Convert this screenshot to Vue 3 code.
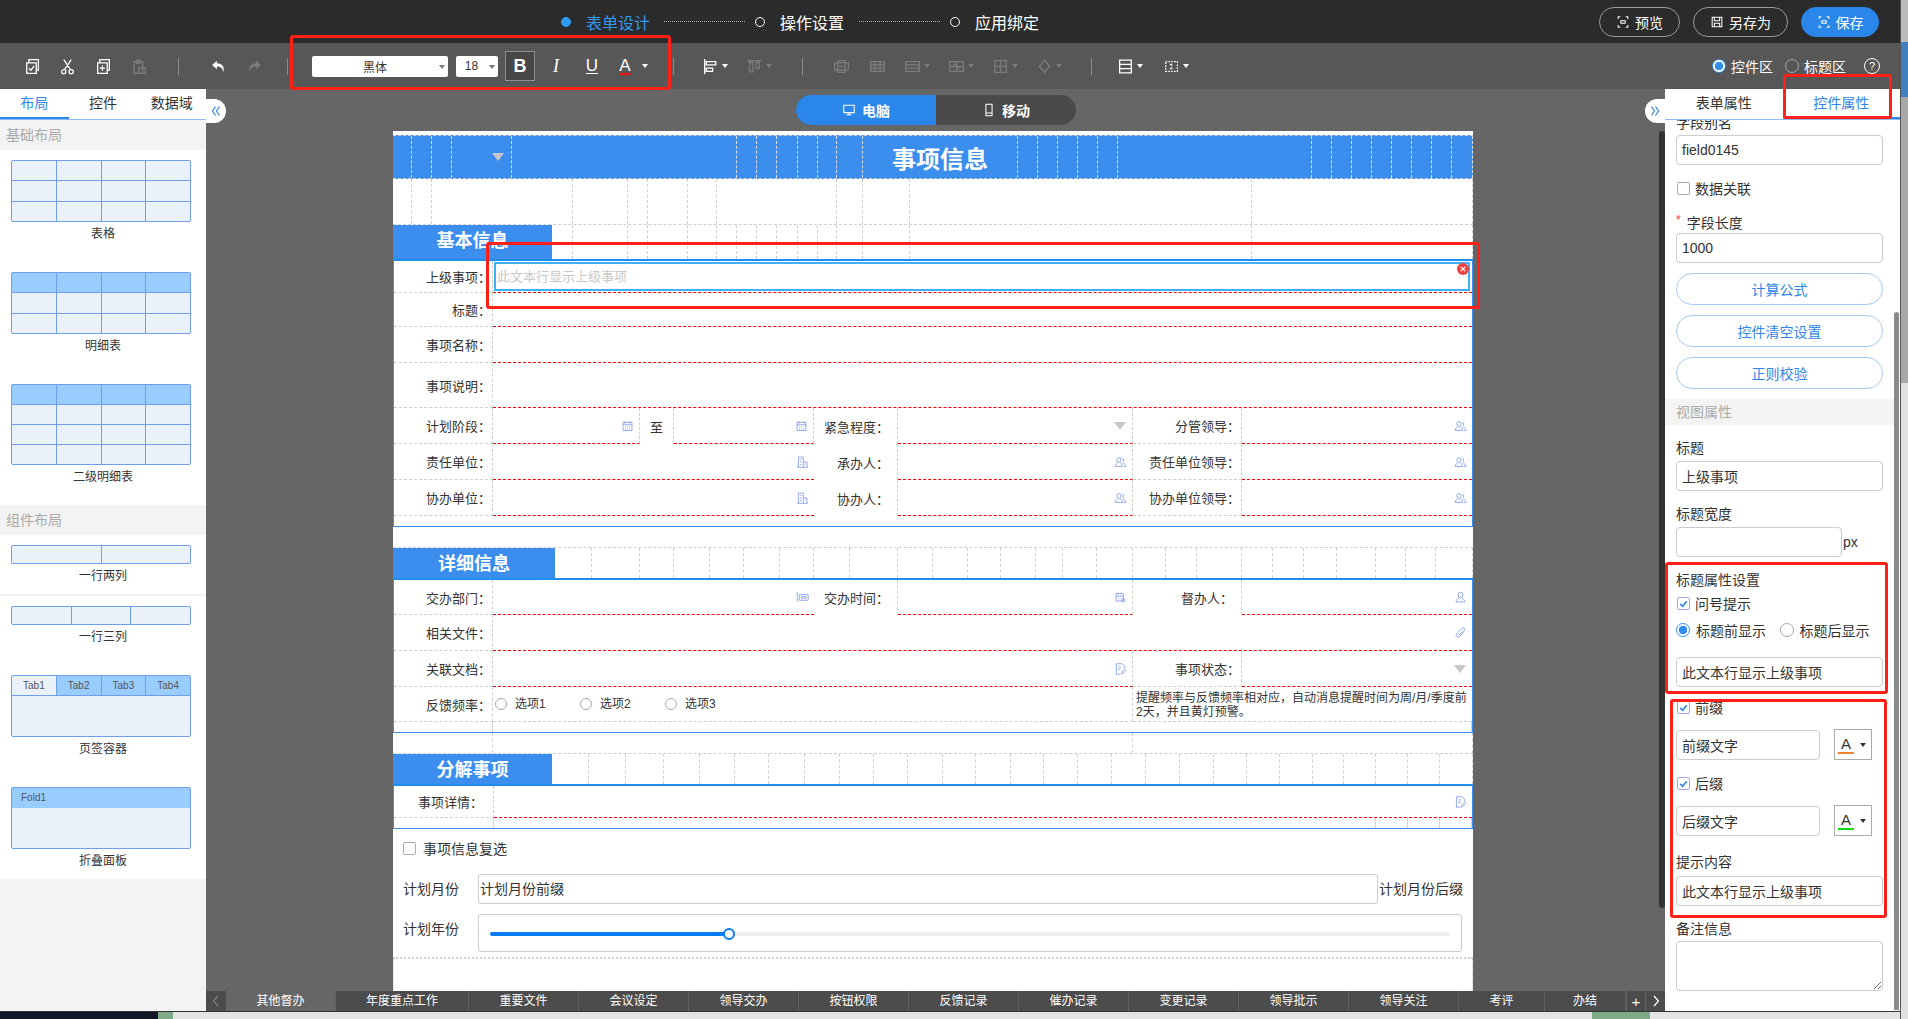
<script setup>
const icons = {
  checkDoc: 'M3.5 4.5h9v10h-9zM5.5 4.5v-3h9v10h-2M5.5 9.5l2 2 3-4',
  scissors: 'M4.5 1.5l6 9M11.5 1.5l-6 9M2.5 13a2 2 0 1 0 4 0 2 2 0 1 0-4 0M9.5 13a2 2 0 1 0 4 0 2 2 0 1 0-4 0',
  copyPlus: 'M2.5 4.5h9v10h-9zM4.5 4.5v-3h9v10h-2M7 7v5M4.5 9.5h5',
  paste: 'M3 3.5h8v11H3zM5.5 2h3v3h-3zM7.5 9h6v5.5h-6z',
  undo: 'M6.5 2.5L2 6.5l4.5 4V8c3.5 0 5.5 1.5 6 5.5 1.5-5-1-8.5-6-8.5z',
  redo: 'M9.5 2.5l4.5 4-4.5 4V8c-3.5 0-5.5 1.5-6 5.5-1.5-5 1-8.5 6-8.5z',
  alignLeft: 'M2.5 1v14M4 3.5h9v3H4zM4 9.5h6v3H4z',
  alignTop: 'M1 2.5h14M3.5 4v9h3V4zM9.5 4v6h3V4z',
  merge: 'M1.5 4.5h13v7h-13zM4.5 2.5h7v11h-7zM6 8h4',
  split: 'M1.5 3.5h13v9h-13zM1.5 6.5h13M1.5 9.5h13M5.5 3.5v9M10.5 3.5v9',
  rows: 'M1.5 3.5h13v9h-13zM1.5 6.5h13M1.5 9.5h13',
  cross: 'M1.5 3.5h13v9h-13zM1.5 8h13M8 3.5v9M5 5.5l6 5',
  table: 'M2.5 2.5h11v11h-11zM2.5 8h11M8 2.5v11',
  fill: 'M8 2l5 6-5 5-5-5zM8 13v2',
  layout: 'M2.5 2h11v12h-11zM2.5 6h11M2.5 10h11',
  field: 'M2.5 3.5h11v9h-11zM8 6v4M6.5 6h3M6.5 10h3',
  calendar: 'M2.5 3.5h11v10h-11zM2.5 6.5h11M5 2v3M11 2v3M5 9h1M7.5 9h1M10 9h1M5 11.5h1M7.5 11.5h1M10 11.5h1',
  building: 'M3 14.5V2h6v12.5M1.5 14.5h13M9 8h4.5v6.5M5 5h2M5 8h2M5 11h2M11 11h1',
  people: 'M6 2.5a2.5 3 0 0 1 0 6 2.5 3 0 0 1 0-6zM1.5 13.5c0-3 2-3.5 3-4.5M10.5 13.5c0-3-2-3.5-3-4.5M1.5 13.5h9M10 3a2.5 3 0 0 1 .5 5.5M11 9.5c2 .5 3.5 1.5 3.5 4h-2.5',
  person: 'M8 2a3 3.5 0 0 1 0 7 3 3.5 0 0 1 0-7zM2.5 14c0-3 2.5-3.5 4-5M13.5 14c0-3-2.500-3.500-4-5M2.500 14h11',
  dept: 'M1.500 2v12M4 5h11v7H4zM6.500 7.500h6v2h-6z',
  calClock: 'M2.500 4h9v9h-9zM2.500 7h9M5 2.500v2M9 2.500v2M5 9.500h1M8 9.500h1M11.500 10a2 2 0 1 1 0 4 2 2 0 1 1 0-4z',
  clip: 'M13 6l-6.500 6.500a2.500 2.500 0 0 1-3.500-3.500l7-7a1.700 1.700 0 0 1 2.500 2.500L6 10.500',
  doc: 'M3 1.500h7l3 3v3M3 1.500v13h5M5 5.500h4M5 8.500h3M9 14l1-2.500 3-3 1.500 1.500-3 3z',
  screen: 'M2 2.500h12v8.500H2zM8 11v2.500M5 13.500h6',
  phone: 'M4.500 1.500h7v13h-7zM4.500 11.500h7',
  scan: 'M5 2H2.500v2.500M11 2h2.500v2.500M5 14H2.500v-2.500M11 14h2.500v-2.500M5.500 6.500h5v3h-5z',
  save: 'M2.500 2.500h11v11h-11zM5 2.500v4h6v-4M5 13.500v-4h6v4'
}

const basicRows = [
  [{ label: '上级事项：' }, { span: 7, selected: true }],
  [{ label: '标题：' }, { span: 7 }],
  [{ label: '事项名称：' }, { span: 7 }],
  [{ label: '事项说明：' }, { span: 7 }],
  [{ label: '计划阶段：' }, { icon: 'calendar', edge: true }, { text: '至', plain: true }, { icon: 'calendar', edge: true }, { label: '紧急程度：', plain: true }, { tri: true, edge: true }, { label: '分管领导：' }, { icon: 'people' }],
  [{ label: '责任单位：' }, { span: 3, icon: 'building' }, { label: '承办人：', plain: true }, { icon: 'people', edge: true }, { label: '责任单位领导：' }, { icon: 'people' }],
  [{ label: '协办单位：' }, { span: 3, icon: 'building' }, { label: '协办人：', plain: true }, { icon: 'people', edge: true }, { label: '协办单位领导：' }, { icon: 'people' }]
]

const detailRows = [
  [{ label: '交办部门：' }, { span: 3, icon: 'dept' }, { label: '交办时间：', plain: true }, { icon: 'calClock', edge: true }, { label: '督办人：', plain: true }, { icon: 'person' }],
  [{ label: '相关文件：' }, { span: 7, icon: 'clip' }],
  [{ label: '关联文档：' }, { span: 5, icon: 'doc', edge: true }, { label: '事项状态：' }, { tri: true }],
  [{ label: '反馈频率：' }, { span: 5, radios: ['选项1', '选项2', '选项3'], gray: true, edge: true }, { span: 2, note: '提醒频率与反馈频率相对应，自动消息提醒时间为周/月/季度前2天，并且黄灯预警。' }]
]

const rowClass = ['r32', 'r34', 'r36', 'r45', 'r36', 'r36', 'r36']
const detailClass = ['r35', 'r36', 'r36', 'r35']

// dashed cell runs, positions are the vertical guide lines of the form designer
function segs(start, lines, end) {
  const xs = [start, ...lines, end]
  return xs.slice(0, -1).map((x, i) => ({ x, w: xs[i + 1] - x }))
}

const headCells = segs(393, [412, 432, 452, 512, 737, 757, 777, 798, 818, 837, 863, 1018, 1038, 1058, 1078, 1098, 1118, 1312, 1332, 1352, 1372, 1392, 1412, 1432, 1452], 1473)
const guideCells = segs(393, [412, 432, 573, 628, 648, 688, 717, 837, 863, 910, 1252], 1473)
const banner1Cells = segs(552, [573, 628, 648, 688, 717, 737, 757, 777, 798, 818, 837, 863, 910, 1252], 1473)
const banner2Cells = segs(555, [592, 640, 674, 710, 744, 780, 814, 850, 898, 933, 968, 1001, 1036, 1063, 1097, 1133, 1166, 1197, 1242, 1273, 1304, 1337, 1376, 1406, 1436], 1473)
const banner3Cells = segs(552, [589, 626, 664, 700, 735, 769, 805, 840, 874, 908, 943, 976, 1011, 1044, 1078, 1112, 1146, 1180, 1214, 1247, 1280, 1313, 1344, 1376, 1408, 1440], 1473)
const gapCells = segs(393, [493, 1133], 1473)
const fillCells = segs(394, [493], 1472)
const tailCells = segs(394, [494, 1376, 1408, 1440], 1472)

const leftTop = [
  { name: '表格', cols: 4, rows: 3, head: 0 },
  { name: '明细表', cols: 4, rows: 3, head: 1 },
  { name: '二级明细表', cols: 4, rows: 4, head: 1 }
]
const tabs4 = ['Tab1', 'Tab2', 'Tab3', 'Tab4']
const bottomTabs = ['其他督办', '年度重点工作', '重要文件', '会议设定', '领导交办', '按钮权限', '反馈记录', '催办记录', '变更记录', '领导批示', '领导关注', '考评', '办结']
</script>

<template>
  <div class="page">
    <div class="app">
      <header class="topbar">
        <div class="steps">
          <span class="dot on"></span><span class="step on">表单设计</span><span class="dash"></span>
          <span class="dot"></span><span class="step">操作设置</span><span class="dash short"></span>
          <span class="dot"></span><span class="step">应用绑定</span>
        </div>
        <div class="actions">
          <button class="act a1"><svg class="ic14" viewBox="0 0 16 16"><path :d="icons.scan" /></svg>预览</button>
          <button class="act a2"><svg class="ic14" viewBox="0 0 16 16"><path :d="icons.save" /></svg>另存为</button>
          <button class="act a3 primary"><svg class="ic14" viewBox="0 0 16 16"><path :d="icons.scan" /></svg>保存</button>
        </div>
      </header>

      <div class="toolbar">
        <span class="tb"><svg class="ic16" viewBox="0 0 16 16"><path :d="icons.checkDoc" /></svg></span>
        <span class="tb"><svg class="ic16" viewBox="0 0 16 16"><path :d="icons.scissors" /></svg></span>
        <span class="tb"><svg class="ic16" viewBox="0 0 16 16"><path :d="icons.copyPlus" /></svg></span>
        <span class="tb off"><svg class="ic16" viewBox="0 0 16 16"><path :d="icons.paste" /></svg></span>
        <i class="sep s1"></i>
        <span class="tb"><svg class="ic16 solid" viewBox="0 0 16 16"><path :d="icons.undo" /></svg></span>
        <span class="tb off"><svg class="ic16 solid" viewBox="0 0 16 16"><path :d="icons.redo" /></svg></span>
        <i class="sep s2"></i>
        <div class="sel font">黑体<b class="caret dark"></b></div>
        <div class="sel size">18<b class="caret dark"></b></div>
        <span class="fmt bold">B</span>
        <span class="fmt ital">I</span>
        <span class="fmt under">U</span>
        <span class="fmt color">A</span><b class="caret c1"></b>
        <i class="sep s3"></i>
        <span class="tb wide m1"><svg class="ic16" viewBox="0 0 16 16"><path :d="icons.alignLeft" /></svg><b class="caret"></b></span>
        <span class="tb wide off"><svg class="ic16" viewBox="0 0 16 16"><path :d="icons.alignTop" /></svg><b class="caret"></b></span>
        <i class="sep s4"></i>
        <span class="tb off m2"><svg class="ic16" viewBox="0 0 16 16"><path :d="icons.merge" /></svg></span>
        <span class="tb off"><svg class="ic16" viewBox="0 0 16 16"><path :d="icons.split" /></svg></span>
        <span class="tb wide off"><svg class="ic16" viewBox="0 0 16 16"><path :d="icons.rows" /></svg><b class="caret"></b></span>
        <span class="tb wide off"><svg class="ic16" viewBox="0 0 16 16"><path :d="icons.cross" /></svg><b class="caret"></b></span>
        <span class="tb wide off"><svg class="ic16" viewBox="0 0 16 16"><path :d="icons.table" /></svg><b class="caret"></b></span>
        <span class="tb wide off"><svg class="ic16" viewBox="0 0 16 16"><path :d="icons.fill" /></svg><b class="caret"></b></span>
        <i class="sep s5"></i>
        <span class="tb wide m3"><svg class="ic16" viewBox="0 0 16 16"><path :d="icons.layout" /></svg><b class="caret"></b></span>
        <span class="tb wide m4"><svg class="ic16 dotted" viewBox="0 0 16 16"><path :d="icons.field" /></svg><b class="caret"></b></span>
        <div class="area">
          <span class="radio on dark"></span><span>控件区</span>
          <span class="radio dark r2"></span><span>标题区</span>
          <span class="help">?</span>
        </div>
      </div>

      <div class="main">
        <aside class="left">
          <nav class="tabs">
            <span class="tab on">布局</span><span class="tab">控件</span><span class="tab">数据域</span>
          </nav>
          <h4 class="group">基础布局</h4>
          <div v-for="item in leftTop" :key="item.name" class="lay">
            <div class="pv" :class="'rows' + item.rows">
              <span v-for="n in item.cols * item.rows" :key="n" :class="{ head: n <= item.cols * item.head }"></span>
            </div>
            <p>{{ item.name }}</p>
          </div>
          <h4 class="group g2">组件布局</h4>
          <div class="lay">
            <div class="pv line two"><span></span><span></span></div>
            <p class="last">一行两列</p>
          </div>
          <div class="lay-sep"></div>
          <div class="lay">
            <div class="pv line three"><span></span><span></span><span></span></div>
            <p>一行三列</p>
          </div>
          <div class="lay">
            <div class="pv tabbed">
              <span v-for="(t, i) in tabs4" :key="t" :class="{ head: i > 0 }">{{ t }}</span>
              <span class="body"></span>
            </div>
            <p>页签容器</p>
          </div>
          <div class="lay">
            <div class="pv fold"><span class="head">Fold1</span><span></span></div>
            <p class="last">折叠面板</p>
          </div>
          <div class="left-rest"></div>
        </aside>

        <section class="center">
          <span class="toggle lt"><svg viewBox="0 0 10 12"><path d="M4.500 1.500L1.500 6l3 4.500M8.500 1.500L5.500 6l3 4.500" /></svg></span>
          <div class="work">
            <div class="device">
              <span class="dev on"><svg class="ic14" viewBox="0 0 16 16"><path :d="icons.screen" /></svg>电脑</span>
              <span class="dev"><svg class="ic14" viewBox="0 0 16 16"><path :d="icons.phone" /></svg>移动</span>
            </div>
            <div class="sheet">
              <svg class="corner" viewBox="0 0 30 30">
                <path d="M0 0h30v30z" fill="#62d3c8" />
                <path d="M15 0h7l8 8v14z" fill="#60c060" />
                <path d="M20 20l10-6v16z" fill="#e8ae62" />
              </svg>
              <div class="form-head">
                <div v-for="c in headCells" :key="c.x" class="fcell" :style="{ width: c.w + 'px' }">
                  <b v-if="c.x === 452" class="tri"></b>
                  <span v-if="c.x === 863" class="form-title">事项信息</span>
                </div>
              </div>
              <div class="guides g45">
                <div v-for="c in guideCells" :key="c.x" class="gcell" :style="{ width: c.w + 'px' }"></div>
              </div>
              <div class="banner-row b35">
                <div class="banner w159">基本信息</div>
                <div v-for="c in banner1Cells" :key="c.x" class="gcell" :style="{ width: c.w + 'px' }"></div>
              </div>

              <div class="block">
                <div class="fgrid">
                  <template v-for="(row, ri) in basicRows" :key="ri">
                    <div
                      v-for="(cell, ci) in row"
                      :key="ci"
                      class="cell"
                      :class="[rowClass[ri], 'span' + (cell.span || 1), {
                        lab: cell.label, val: !cell.label && !cell.text, plain: cell.plain, edge: cell.edge, mid: cell.text
                      }]"
                    >
                      <template v-if="cell.label">{{ cell.label }}</template>
                      <template v-if="cell.text">{{ cell.text }}</template>
                      <div v-if="cell.selected" class="selected">
                        此文本行显示上级事项
                        <svg class="close" viewBox="0 0 12 12"><circle cx="6" cy="6" r="6" fill="#ee4444" /><path d="M3.800 3.800l4.400 4.400M8.200 3.800l-4.400 4.400" stroke="#fff" fill="none" /></svg>
                      </div>
                      <svg v-if="cell.icon" class="cell-ic" viewBox="0 0 16 16"><path :d="icons[cell.icon]" /></svg>
                      <b v-if="cell.tri" class="tri cell-tri"></b>
                    </div>
                  </template>
                </div>
                <div class="filler"></div>
              </div>

              <div class="guides g20">
                <div class="gcell nobd"></div>
              </div>
              <div class="banner-row b30 topdash">
                <div class="banner w162">详细信息</div>
                <div v-for="c in banner2Cells" :key="c.x" class="gcell" :style="{ width: c.w + 'px' }"></div>
              </div>

              <div class="block">
                <div class="fgrid">
                  <template v-for="(row, ri) in detailRows" :key="ri">
                    <div
                      v-for="(cell, ci) in row"
                      :key="ci"
                      class="cell"
                      :class="[detailClass[ri], 'span' + (cell.span || 1), {
                        lab: cell.label, val: !cell.label && !cell.note, plain: cell.plain, edge: cell.edge, gray: cell.gray, notecell: cell.note
                      }]"
                    >
                      <template v-if="cell.label">{{ cell.label }}</template>
                      <svg v-if="cell.icon" class="cell-ic" viewBox="0 0 16 16"><path :d="icons[cell.icon]" /></svg>
                      <b v-if="cell.tri" class="tri cell-tri"></b>
                      <div v-if="cell.radios" class="opts">
                        <span v-for="o in cell.radios" :key="o" class="opt"><i class="radio"></i>{{ o }}</span>
                      </div>
                      <p v-if="cell.note" class="note">{{ cell.note }}</p>
                    </div>
                  </template>
                </div>
                <div class="guides g10">
                  <div v-for="c in fillCells" :key="c.x" class="gcell" :style="{ width: c.w + 'px' }"></div>
                </div>
              </div>

              <div class="guides g20">
                <div v-for="c in gapCells" :key="c.x" class="gcell" :style="{ width: c.w + 'px' }"></div>
              </div>
              <div class="banner-row b30 topdash">
                <div class="banner w159">分解事项</div>
                <div v-for="c in banner3Cells" :key="c.x" class="gcell" :style="{ width: c.w + 'px' }"></div>
              </div>

              <div class="block">
                <div class="one-row">
                  <div class="cell lab far">事项详情：</div>
                  <div class="cell val grow"><svg class="cell-ic" viewBox="0 0 16 16"><path :d="icons.doc" /></svg></div>
                </div>
                <div class="guides g10">
                  <div v-for="c in tailCells" :key="c.x" class="gcell" :style="{ width: c.w + 'px' }"></div>
                </div>
              </div>

              <div class="extra">
                <label class="chk-row"><i class="chk"></i>事项信息复选</label>
                <div class="ex-row month">
                  <span class="ex-label">计划月份</span>
                  <div class="ex-input">计划月份前缀</div>
                  <span class="ex-suffix">计划月份后缀</span>
                </div>
                <div class="ex-row year">
                  <span class="ex-label">计划年份</span>
                  <div class="ex-slider">
                    <div class="track"><div class="fill"></div><i class="knob"></i></div>
                  </div>
                </div>
              </div>
              <div class="sheet-end"></div>
            </div>
          </div>
          <span class="toggle rt"><svg viewBox="0 0 10 12"><path d="M1.500 1.500L4.500 6l-3 4.500M5.500 1.500L8.500 6l-3 4.500" /></svg></span>
          <i class="work-scroll"></i>

          <div class="sheets">
            <span class="nav l"><svg viewBox="0 0 8 12"><path d="M6 1L1.500 6 6 11" /></svg></span>
            <span v-for="(t, i) in bottomTabs" :key="t" class="sheet-tab" :class="{ on: i === 0, long: t.length > 4, small: t.length < 4 }">{{ t }}</span>
            <span class="nav plus">+</span>
            <span class="nav r"><svg viewBox="0 0 8 12"><path d="M2 1l4.500 5L2 11" /></svg></span>
          </div>
        </section>

        <aside class="right">
          <nav class="tabs rtabs">
            <span class="tab">表单属性</span><span class="tab on">控件属性</span>
          </nav>
          <div class="props">
            <div class="pl first">字段别名</div>
            <input class="pi" value="field0145" readonly />
            <label class="pc mt13"><i class="chk"></i>数据关联</label>
            <div class="pl mt12"><em>*</em>字段长度</div>
            <input class="pi" value="1000" readonly />
            <button class="pbtn">计算公式</button>
            <button class="pbtn">控件清空设置</button>
            <button class="pbtn">正则校验</button>
            <h4 class="psec">视图属性</h4>
            <div class="pl mt13">标题</div>
            <input class="pi" value="上级事项" readonly />
            <div class="pl mt13">标题宽度</div>
            <div class="pw"><input class="pi short" readonly /><span>px</span></div>
            <div class="pl mt13 tight">标题属性设置</div>
            <label class="pc mt3"><i class="chk on"><svg viewBox="0 0 12 12"><path d="M2.500 6.500l2.500 2.500 4.500-5.500" /></svg></i>问号提示</label>
            <div class="pr">
              <span class="radio on big"></span><span class="rtxt">标题前显示</span>
              <span class="radio big"></span><span class="rtxt">标题后显示</span>
            </div>
            <input class="pi mt17" value="此文本行显示上级事项" readonly />
            <label class="pc mt10"><i class="chk on"><svg viewBox="0 0 12 12"><path d="M2.500 6.500l2.500 2.500 4.500-5.500" /></svg></i>前缀</label>
            <div class="pa">
              <input class="pi mid" value="前缀文字" readonly />
              <span class="colorbtn"><span class="ca orange">A</span><b class="caret dark"></b></span>
            </div>
            <label class="pc mt13"><i class="chk on"><svg viewBox="0 0 12 12"><path d="M2.500 6.500l2.500 2.500 4.500-5.500" /></svg></i>后缀</label>
            <div class="pa">
              <input class="pi mid" value="后缀文字" readonly />
              <span class="colorbtn"><span class="ca green">A</span><b class="caret dark"></b></span>
            </div>
            <div class="pl mt16">提示内容</div>
            <input class="pi tipi" value="此文本行显示上级事项" readonly />
            <div class="pl mt13 tight">备注信息</div>
            <textarea class="pt" readonly></textarea>
          </div>
          <i class="right-scroll"></i>
        </aside>
      </div>

      <div class="osbar"><span class="os1"></span><span class="os2"></span><span class="os3"></span></div>
    </div>
    <div class="pagebar"><span class="pb1"></span><span class="pb2"></span><span class="pb3"></span></div>

    <i class="mark m-a"></i>
    <i class="mark m-b"></i>
    <i class="mark m-c"></i>
    <i class="mark m-d"></i>
    <i class="mark m-e"></i>
  </div>
</template>

<style scoped>
.page {
  position: relative;
  display: flex;
  width: 1908px;
  height: 1019px;
  overflow: hidden;
  font-family: "Liberation Sans", "Noto Sans CJK SC", sans-serif;
  font-size: 14px;
  color: #333;
}
.app {
  width: 1900px;
  display: flex;
  flex-direction: column;
}
svg path {
  fill: none;
  stroke: currentColor;
  stroke-width: 1.2;
}

/* top */
.topbar {
  height: 43px;
  flex: none;
  background: #2b2b2b;
  display: flex;
  align-items: center;
}
.steps {
  display: flex;
  align-items: center;
  margin-left: 561px;
  font-size: 16px;
  color: #fff;
}
.dot {
  width: 10px;
  height: 10px;
  border: 1.5px solid #fff;
  border-radius: 50%;
  box-sizing: border-box;
  margin-right: 15px;
}
.dot.on {
  background: #2f9bf5;
  border-color: #2f9bf5;
}
.step.on {
  color: #2f9bf5;
}
.dash {
  width: 81px;
  border-top: 1px dotted #aaa;
  margin: 0 10px 0 14px;
}
.dash.short {
  margin-left: 15px;
}
.actions {
  margin-left: auto;
  margin-right: 21px;
  display: flex;
}
.act {
  height: 30px;
  border: 1px solid #9a9a9a;
  border-radius: 15px;
  background: transparent;
  color: #fff;
  font: inherit;
  font-size: 14px;
  display: flex;
  align-items: center;
  justify-content: center;
  gap: 5px;
  padding: 0;
}
.a1 { width: 81px; }
.a2 { width: 95px; margin-left: 13px; }
.a3 { width: 78px; margin-left: 13px; }
.primary {
  background: #2a86e8;
  border-color: #2a86e8;
}
.ic14 {
  width: 14px;
  height: 14px;
}

/* toolbar */
.toolbar {
  height: 46px;
  flex: none;
  background: #575757;
  display: flex;
  align-items: center;
  padding-left: 13px;
  color: #fff;
}
.tb {
  width: 36px;
  height: 22px;
  flex: none;
  display: flex;
  align-items: center;
  justify-content: center;
  gap: 3px;
}
.tb.wide {
  width: 44px;
}
.tb.off {
  color: #7c7c7c;
}
.ic16 {
  width: 17px;
  height: 17px;
}
.solid path {
  fill: currentColor;
  stroke: none;
}
.dotted path {
  stroke-dasharray: 1.500 1.200;
}
.caret {
  display: inline-block;
  width: 0;
  height: 0;
  border-left: 3px solid transparent;
  border-right: 3px solid transparent;
  border-top: 4px solid currentColor;
}
.sep {
  width: 1px;
  height: 17px;
  background: #8c8c8c;
  flex: none;
}
.s1 { margin: 0 21px; }
.s2 { margin: 0 24px 0 15px; }
.s3 { margin: 0 0 0 25px; }
.s4 { margin: 0 0 0 0; margin-left: 21px; }
.s5 { margin-left: 20px; }
.m1 { margin-left: 19px; }
.m2 { margin-left: 20px; }
.m3 { margin-left: 16px; }
.m4 { margin-left: 2px; }
.sel {
  height: 21px;
  background: #fff;
  border-radius: 2px;
  color: #333;
  font-size: 12px;
  display: flex;
  align-items: center;
  justify-content: center;
  position: relative;
  flex: none;
}
.sel.font {
  width: 136px;
  padding-right: 10px;
  box-sizing: border-box;
}
.sel.size {
  width: 42px;
  margin-left: 8px;
  padding-right: 11px;
  box-sizing: border-box;
}
.sel .caret {
  position: absolute;
  right: 3px;
  top: 9px;
  color: #777;
}
.fmt {
  flex: none;
  text-align: center;
  font-size: 17px;
  color: #fff;
}
.bold {
  width: 28px;
  height: 28px;
  line-height: 28px;
  margin-left: 7px;
  border: 1px solid #8f8f8f;
  background: #474747;
  font-weight: 700;
  font-size: 18px;
}
.ital {
  width: 36px;
  margin-left: 3px;
  font-style: italic;
  font-family: "Liberation Serif", serif;
  font-size: 18px;
}
.under {
  width: 36px;
  text-decoration: underline;
  text-underline-offset: 2px;
}
.color {
  width: 30px;
  text-decoration: underline;
  text-decoration-color: #f01010;
  text-decoration-thickness: 2px;
  text-underline-offset: 2px;
}
.c1 { margin-left: 2px; }
.area {
  margin-left: auto;
  margin-right: 20px;
  display: flex;
  align-items: center;
  font-size: 14px;
  color: #fff;
}
.radio {
  display: inline-block;
  box-sizing: border-box;
  width: 12px;
  height: 12px;
  border: 1px solid #a8a8a8;
  border-radius: 50%;
  background: #fff;
  flex: none;
}
.radio.dark {
  width: 14px;
  height: 14px;
  background: transparent;
  margin-right: 5px;
}
.radio.on.dark {
  border-color: #3190f0;
  background: radial-gradient(circle, #2f8ef0 0 4px, #fff 4.500px);
}
.radio.r2 {
  margin-left: 12px;
}
.help {
  width: 14px;
  height: 14px;
  border: 1px solid #fff;
  border-radius: 50%;
  margin-left: 18px;
  font-size: 11px;
  line-height: 14px;
  text-align: center;
}

/* body */
.main {
  flex: 1;
  min-height: 0;
  display: flex;
}
.left {
  width: 206px;
  flex: none;
  background: #fff;
  display: flex;
  flex-direction: column;
}
.tabs {
  display: flex;
  height: 31px;
  flex: none;
  border-bottom: 1px solid #8fbcf0;
  box-sizing: border-box;
}
.tab {
  flex: 1;
  text-align: center;
  line-height: 28px;
  font-size: 14px;
  color: #333;
}
.tab.on {
  color: #2f86e8;
  box-shadow: inset 0 -2px 0 #2a86e8;
}
.group {
  margin: 0;
  height: 30px;
  line-height: 30px;
  padding-left: 6px;
  background: #f3f3f3;
  color: #aaa;
  font-size: 14px;
  font-weight: 400;
  flex: none;
}
.lay {
  padding: 10px 11px 0;
  flex: none;
}
.lay p {
  margin: 0 0 10px;
  height: 30px;
  padding-top: 1px;
  box-sizing: border-box;
  line-height: 22px;
  text-align: center;
  font-size: 12px;
  color: #333;
}
.lay p.last {
  margin-bottom: 0;
}
.lay-sep {
  height: 2px;
  background: #f3f3f3;
  flex: none;
}
.left-rest {
  flex: 1;
  background: #f3f3f3;
}
.pv {
  display: grid;
  grid-template-columns: repeat(4, 1fr);
  background: #6e9fe8;
  gap: 1px;
  border: 1px solid #6e9fe8;
  border-radius: 2px;
  box-sizing: border-box;
  width: 180px;
  overflow: hidden;
}
.pv span {
  background: #eaf1f9;
  font-size: 10px;
  color: #555;
  text-align: center;
  line-height: 19px;
}
.pv span.head {
  background: #99ccff;
}
.rows3 { height: 62px; grid-template-rows: repeat(3, 1fr); }
.rows4 { height: 81px; grid-template-rows: repeat(4, 1fr); }
.line { height: 19px; }
.line.two { grid-template-columns: repeat(2, 1fr); }
.line.three { grid-template-columns: repeat(3, 1fr); }
.tabbed {
  height: 62px;
  grid-template-rows: 19px 1fr;
}
.tabbed .body {
  grid-column: 1 / 5;
}
.fold {
  height: 62px;
  grid-template-columns: 1fr;
  grid-template-rows: 20px 1fr;
  gap: 0;
}
.fold .head {
  text-align: left;
  padding-left: 9px;
  line-height: 20px;
}

/* designer canvas */
.center {
  flex: 1;
  min-width: 0;
  position: relative;
  background: #666;
  display: flex;
  flex-direction: column;
}
.work {
  flex: 1;
  min-height: 0;
  overflow: hidden;
  padding: 6px 0 0 187px;
}
.device {
  width: 280px;
  height: 30px;
  margin-left: 403px;
  border-radius: 15px;
  overflow: hidden;
  display: flex;
  background: #4a4a4a;
  color: #fff;
  font-size: 14px;
  font-weight: 700;
}
.dev {
  display: flex;
  align-items: center;
  justify-content: center;
  gap: 6px;
  width: 140px;
}
.dev.on {
  background: #2a86e8;
}
.sheet {
  width: 1080px;
  height: 860px;
  margin-top: 6px;
  background: #fff;
  padding-top: 4px;
  box-sizing: border-box;
  position: relative;
  overflow: hidden;
  color: #333;
}
.corner {
  position: absolute;
  right: 0;
  top: 0;
  width: 30px;
  height: 30px;
}
.corner path {
  stroke: none;
}
.form-head {
  height: 44px;
  background: #3b8eed;
  border-top: 1px dashed #cfcfcf;
  border-bottom: 1px dashed #cfcfcf;
  box-sizing: border-box;
  display: flex;
}
.fcell {
  height: 100%;
  box-sizing: border-box;
  border-right: 1px dashed #dedede;
  display: flex;
  align-items: center;
  justify-content: center;
  position: relative;
}
.form-title {
  color: #fff;
  font-size: 24px;
  font-weight: 700;
  white-space: nowrap;
}
.tri {
  width: 0;
  height: 0;
  border-left: 6px solid transparent;
  border-right: 6px solid transparent;
  border-top: 8px solid #c8c8c8;
  display: block;
}
.fcell .tri {
  margin-left: 33px;
}
.guides {
  display: flex;
}
.g45 { height: 45px; }
.g20 { height: 20px; }
.g10 { height: 10px; }
.gcell {
  box-sizing: border-box;
  border-right: 1px dashed #cfcfcf;
}
.gcell.nobd {
  border: 0;
}
.banner-row {
  display: flex;
}
.b35 { height: 35px; border-top: 1px dashed #cfcfcf; box-sizing: border-box; }
.b30 { height: 30px; }
.topdash {
  border-top: 1px dashed #cfcfcf;
  height: 31px;
  box-sizing: border-box;
}
.banner {
  background: #3b8eed;
  color: #fff;
  font-size: 18px;
  font-weight: 700;
  text-align: center;
  line-height: 33px;
  flex: none;
}
.w159 { width: 159px; }
.w162 { width: 162px; }
.block {
  border: 1px solid #3b8eed;
  border-top-width: 2px;
  border-top-color: #1e8ff0;
}
.fgrid {
  display: grid;
  grid-template-columns: 99px 147px 34px 140px 84px 235px 109px 1fr;
}
.filler {
  height: 10px;
}
.cell {
  box-sizing: border-box;
  position: relative;
  display: flex;
  align-items: center;
  font-size: 13px;
  min-width: 0;
}
.r32 { height: 32px; }
.r34 { height: 34px; }
.r35 { height: 35px; }
.r36 { height: 36px; }
.r45 { height: 45px; }
.span1 { grid-column: span 1; }
.span2 { grid-column: span 2; }
.span3 { grid-column: span 3; }
.span5 { grid-column: span 5; }
.span7 { grid-column: span 7; }
.lab {
  justify-content: flex-end;
  border-right: 1px dashed #cfcfcf;
  border-bottom: 1px dashed #cfcfcf;
  padding-right: 1px;
}
.lab.plain {
  border-bottom: 0;
  padding-right: 8px;
  padding-left: 0;
}
.lab.far {
  width: 100px;
  height: 32px;
  padding-right: 10px;
}
.mid {
  justify-content: center;
  border-right: 1px dashed #cfcfcf;
}
.val {
  border-bottom: 1px dashed #f00;
  justify-content: flex-end;
}
.val.edge {
  border-right: 1px dashed #cfcfcf;
}
.val.gray {
  border-bottom-color: #cfcfcf;
  justify-content: flex-start;
  align-items: flex-start;
}
.notecell {
  border-bottom: 1px dashed #cfcfcf;
  align-items: flex-start;
}
.one-row {
  display: flex;
  height: 32px;
}
.grow {
  flex: 1;
  height: 32px;
  border-left: 0;
}
.cell-ic {
  width: 13px;
  height: 14px;
  margin-right: 5px;
  color: #7d98ea;
}
.cell-ic path {
  stroke-width: 1;
}
.cell-tri {
  margin-right: 6px;
  border-left-width: 6px;
  border-right-width: 6px;
}
.selected {
  position: absolute;
  inset: 1px 2px 1px 1px;
  border: 2px solid #3fb0f8;
  box-sizing: border-box;
  color: #c8c8c8;
  font-size: 13px;
  line-height: 26px;
  padding-left: 1px;
}
.close {
  position: absolute;
  top: -1px;
  right: -1px;
  width: 12px;
  height: 12px;
}
.close path {
  stroke: #fff;
  fill: none;
}
.opts {
  display: flex;
  padding: 8px 0 0 2px;
}
.opt {
  width: 85px;
  display: flex;
  align-items: center;
  gap: 8px;
  font-size: 12px;
  line-height: 18px;
}
.note {
  margin: 4px 0 0 3px;
  font-size: 12px;
  line-height: 14px;
  color: #333;
}
.extra {
  padding: 9px 11px 0 10px;
  font-size: 14px;
}
.chk-row {
  display: flex;
  align-items: center;
  gap: 7px;
  height: 20px;
}
.chk {
  display: inline-block;
  box-sizing: border-box;
  width: 13px;
  height: 13px;
  border: 1px solid #aaa;
  border-radius: 2px;
  background: #fff;
  flex: none;
}
.chk svg {
  display: block;
  width: 11px;
  height: 11px;
  color: #2f86e8;
}
.chk svg path {
  stroke-width: 1.800;
}
.chk.on {
  border-color: #a6a6ea;
}
.ex-row {
  display: flex;
  align-items: flex-start;
}
.ex-label {
  width: 75px;
  flex: none;
}
.month {
  margin-top: 16px;
  line-height: 30px;
}
.year {
  margin-top: 10px;
  line-height: 30px;
}
.ex-input {
  width: 900px;
  height: 30px;
  flex: none;
  border: 1px solid #ccc;
  border-radius: 3px;
  box-sizing: border-box;
  padding-left: 1px;
  line-height: 28px;
}
.ex-suffix {
  white-space: nowrap;
  margin-left: 1px;
}
.ex-slider {
  width: 985px;
  height: 38px;
  border: 1px solid #ccc;
  border-radius: 3px;
  box-sizing: border-box;
  padding: 17px 11px 0;
}
.track {
  position: relative;
  height: 4px;
  background: #f0eeee;
  border-radius: 2px;
}
.fill {
  width: 239px;
  height: 100%;
  background: #0a7cf0;
  border-radius: 2px;
}
.knob {
  position: absolute;
  left: 233px;
  top: -4px;
  width: 12px;
  height: 12px;
  box-sizing: border-box;
  border: 2px solid #0a7cf0;
  border-radius: 50%;
  background: #fff;
}
.sheet-end {
  margin-top: 5px;
  height: 33px;
  border-top: 2px dotted #cfcfcf;
  border-bottom: 2px dotted #cfcfcf;
  border-left: 1px dotted #cfcfcf;
  border-right: 1px dotted #cfcfcf;
}
.toggle {
  position: absolute;
  top: 10px;
  width: 20px;
  height: 24px;
  background: #fff;
  display: flex;
  align-items: center;
  justify-content: center;
  color: #2f86e8;
  z-index: 2;
}
.toggle svg {
  width: 10px;
  height: 12px;
}
.toggle.lt {
  left: 0;
  border-radius: 0 12px 12px 0;
}
.toggle.rt {
  right: 0;
  border-radius: 12px 0 0 12px;
}
.work-scroll {
  position: absolute;
  right: 0;
  top: 42px;
  width: 6px;
  height: 777px;
  border-radius: 3px;
  background: #333;
}
.sheets {
  height: 20px;
  flex: none;
  display: flex;
  background: #4c4c4c;
  color: #fff;
  font-size: 12px;
}
.nav {
  display: flex;
  align-items: center;
  justify-content: center;
  flex: none;
}
.nav svg {
  width: 8px;
  height: 12px;
}
.nav.l {
  width: 20px;
  color: #808080;
}
.nav.plus {
  width: 19px;
  font-size: 15px;
  border-left: 1px solid #666;
  box-sizing: border-box;
}
.nav.r {
  width: 20px;
  border-left: 1px solid #666;
  box-sizing: border-box;
}
.sheet-tab {
  width: 110px;
  flex: none;
  text-align: center;
  line-height: 20px;
  box-sizing: border-box;
  border-right: 1px solid #5f5f5f;
}
.sheet-tab.long { width: 133px; }
.sheet-tab.small { width: 86px; }
.sheet-tab.small:nth-last-child(3) { width: 81px; }
.sheet-tab.on {
  background: #666;
}

/* right panel */
.right {
  width: 235px;
  flex: none;
  background: #fff;
  position: relative;
  display: flex;
  flex-direction: column;
  overflow: hidden;
}
.rtabs {
  height: 31px;
}
.props {
  padding: 0 17px 0 11px;
  display: flex;
  flex-direction: column;
  min-height: 0;
}
.pl {
  height: 20px;
  line-height: 20px;
  font-size: 14px;
  color: #333;
  margin-bottom: 3px;
  flex: none;
}
.pl.first {
  margin-top: -7px;
  margin-bottom: 2px;
  position: relative;
  z-index: 0;
}
.pl.tight {
  margin-bottom: 0;
}
.pl em {
  color: #f33;
  font-style: normal;
  font-size: 12px;
  margin-right: 6px;
  vertical-align: 4px;
}
.rtabs {
  position: relative;
  z-index: 1;
  background: #fff;
}
.pi {
  display: block;
  box-sizing: border-box;
  width: 207px;
  height: 30px;
  border: 1px solid #ccc;
  border-radius: 4px;
  padding: 0 5px;
  font: inherit;
  font-size: 14px;
  color: #333;
  outline: none;
  background: #fff;
  flex: none;
}
.pi.short {
  width: 166px;
}
.pi.mid {
  width: 144px;
}
.pi.tipi {
  margin-top: 1px;
}
.pc {
  height: 20px;
  display: flex;
  align-items: center;
  gap: 5px;
  font-size: 14px;
  padding-left: 1px;
  flex: none;
}
.mt3 { margin-top: 3px; }
.mt10 { margin-top: 10px; }
.mt12 { margin-top: 12px; }
.mt13 { margin-top: 13px; }
.mt16 { margin-top: 16px; }
.mt17 { margin-top: 17px; }
.pbtn {
  height: 32px;
  flex: none;
  margin-top: 10px;
  width: 207px;
  border: 1px solid #a3cdf7;
  border-radius: 16px;
  background: #fff;
  color: #2f86e8;
  font: inherit;
  font-size: 14px;
}
.psec {
  margin: 10px -11px 0;
  height: 26px;
  line-height: 26px;
  background: #f4f4f4;
  padding-left: 11px;
  font-size: 14px;
  font-weight: 400;
  color: #aaa;
  flex: none;
}
.pw {
  display: flex;
  align-items: center;
  gap: 1px;
  flex: none;
}
.pr {
  margin-top: 7px;
  height: 20px;
  display: flex;
  align-items: center;
  flex: none;
}
.radio.big {
  width: 14px;
  height: 14px;
}
.radio.on.big {
  border-color: #3190f0;
  background: radial-gradient(circle, #2f8ef0 0 4px, #fff 4.500px);
}
.rtxt {
  width: 86px;
  margin-left: 6px;
}
.pa {
  margin-top: 12px;
  display: flex;
  align-items: center;
  flex: none;
}
.colorbtn {
  width: 38px;
  height: 31px;
  margin-left: 14px;
  border: 1px solid #aaa;
  box-sizing: border-box;
  display: flex;
  align-items: center;
  gap: 6px;
  padding-left: 3px;
}
.ca {
  width: 16px;
  text-align: center;
  font-size: 15px;
  line-height: 16px;
  border-bottom: 2px solid;
  color: #333;
}
.orange { border-bottom-color: #f08030; }
.green { border-bottom-color: #10dd10; }
.pt {
  display: block;
  box-sizing: border-box;
  width: 207px;
  height: 50px;
  margin-top: 2px;
  border: 1px solid #ccc;
  border-radius: 4px;
  font: inherit;
  outline: none;
  flex: none;
}
.right-scroll {
  position: absolute;
  right: 1px;
  top: 223px;
  bottom: 1px;
  width: 5px;
  background: #8a8a8a;
  border-radius: 3px 3px 0 0;
}
.osbar {
  height: 8px;
  flex: none;
  display: flex;
  background: #e4e4e4;
  border-top: 1px solid #333;
  box-sizing: border-box;
}
.os1 {
  width: 158px;
  background: #101828;
}
.os2 {
  width: 15px;
  background: #7faa88;
}
.os3 {
  margin-left: 1419px;
  width: 58px;
  background: #7faa88;
}
.pagebar {
  width: 8px;
  flex: none;
  background: #e0e0e0;
  border-left: 1px solid #555;
  box-sizing: border-box;
  display: flex;
  flex-direction: column;
}
.pb1 {
  height: 42px;
  background: #bbb;
}
.pb2 {
  height: 55px;
  background: #4080c0;
}
.pb3 {
  height: 286px;
  background: #a8a8a8;
}

/* red annotations over the screenshot */
.mark {
  position: absolute;
  box-sizing: border-box;
  border: 3px solid #ff2018;
  border-radius: 3px;
  pointer-events: none;
  z-index: 5;
}
.m-a { left: 290px; top: 35px; width: 381px; height: 55px; }
.m-b { left: 486px; top: 242px; width: 994px; height: 67px; }
.m-c { left: 1783px; top: 74px; width: 109px; height: 45px; }
.m-d { left: 1665px; top: 562px; width: 223px; height: 132px; }
.m-e { left: 1670px; top: 699px; width: 217px; height: 219px; }
</style>

<style>
html, body {
  margin: 0;
  overflow: hidden;
}
</style>
